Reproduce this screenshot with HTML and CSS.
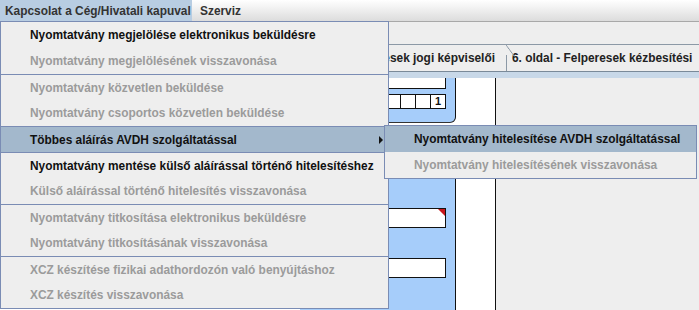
FILE: index.html
```html
<!DOCTYPE html>
<html lang="hu">
<head>
    <meta charset="UTF-8">
    <title>Nyomtatványkitöltő</title>
    <link rel="stylesheet" href="styles.css">
</head>
<body>
<div class="app">

    <div class="menubar">
        <span class="menu-title active">Kapcsolat a Cég/Hivatali kapuval</span>
        <span class="menu-title">Szerviz</span>
    </div>

    <div class="toolbar"></div>

    <div class="tabs">
        <div class="tab tab-first"></div>
        <div class="tab tab-prev">5. oldal - Felperesek jogi képviselői</div>
        <div class="tab tab-next">6. oldal - Felperesek kézbesítési</div>
    </div>
    <div class="tab-band"></div>

    <div class="sheet">
        <div class="sheet-left"></div>
        <div class="blue-col">
            <div class="blue-box box-top">
                <div class="field field-top"></div>
                <div class="cells">
                    <span></span><span></span><span></span><span>1</span>
                </div>
            </div>
            <div class="blue-box box-bottom">
                <div class="field flagged"></div>
                <div class="field"></div>
            </div>
        </div>
        <div class="white-col"></div>
        <div class="sheet-rest"></div>
    </div>

    <!-- open menu -->
    <div class="popup main-menu">
        <div class="item">Nyomtatvány megjelölése elektronikus beküldésre</div>
        <div class="item disabled">Nyomtatvány megjelölésének visszavonása</div>
        <div class="item first disabled">Nyomtatvány közvetlen beküldése</div>
        <div class="item disabled">Nyomtatvány csoportos közvetlen beküldése</div>
        <div class="item first selected has-sub">
            <span>Többes aláírás AVDH szolgáltatással</span>
            <span class="arrow"></span>
        </div>
        <div class="item first">Nyomtatvány mentése külső aláírással történő hitelesítéshez</div>
        <div class="item disabled">Külső aláírással történő hitelesítés visszavonása</div>
        <div class="item first disabled">Nyomtatvány titkosítása elektronikus beküldésre</div>
        <div class="item disabled">Nyomtatvány titkosításának visszavonása</div>
        <div class="item first disabled">XCZ készítése fizikai adathordozón való benyújtáshoz</div>
        <div class="item disabled">XCZ készítés visszavonása</div>
    </div>

    <div class="popup sub-menu">
        <div class="item selected">Nyomtatvány hitelesítése AVDH szolgáltatással</div>
        <div class="item disabled">Nyomtatvány hitelesítésének visszavonása</div>
    </div>

</div>
</body>
</html>
```

FILE: styles.css
```css
* { box-sizing: border-box; }
body { margin: 0; font-family: "Liberation Sans", Arial, sans-serif; font-size: 11.9px; font-weight: bold; color: #111; }
.app { position: relative; width: 699px; height: 310px; overflow: hidden; background: #eeeeee; }

/* menu bar */
.menubar { display: flex; height: 22px; background: linear-gradient(#ffffff, #dcdcdc); border-bottom: 1px solid #a8a8a8; }
.menu-title { display: flex; align-items: center; padding: 0 5px; color: #333; white-space: nowrap; }
.menu-title.active { width: 192px; background: #b8cde2; }
.menu-title + .menu-title { padding-left: 8px; }

.toolbar { height: 23px; border-bottom: 1px solid #8c99a6; }

/* tabs */
.tabs { display: flex; height: 26px; overflow: hidden; }
.tab { display: flex; align-items: center; flex-shrink: 0; white-space: nowrap; padding: 0 11px; color: #222; background: #eeeeee; overflow: hidden; }
.tab-first { width: 250px; }
.tab-prev { width: 256px; justify-content: flex-end; }
.tab-next { position: relative; flex: 1 1 auto; padding-left: 6px; }
.tab-next::before { content: ""; position: absolute; left: 0; top: 0; width: 8px; height: 11px;
    background: linear-gradient(to top right, transparent 45%, #8c99a6 50%, transparent 57%); }
.tab-next::after { content: ""; position: absolute; left: 0; top: 10px; bottom: 0; width: 1px; background: #8c99a6; }
.tab-band { height: 7px; border-top: 1px solid #7a8a99; background: #c8d8e8; }

/* form sheet */
.sheet { display: flex; height: 232px; }
.sheet-left { width: 300px; background: #ffffff; }
.blue-col { display: flex; flex-direction: column; gap: 2px; width: 156px; background: #ffffff; }
.blue-box { background: #a6cdfa; border-right: 1px solid #111; padding-right: 9px; }
.box-top { height: 45px; border-bottom: 1px solid #333; border-bottom-right-radius: 6px; }
.box-bottom { flex: 1; padding-top: 83px; }
.field { position: relative; height: 20px; background: #fff; border: 1px solid #111; }
.field + .field { margin-top: 30px; }
.field-top { height: 11px; border-top: none; }
.flagged::after { content: ""; position: absolute; right: 0; top: 0; border-top: 7px solid #c8161b; border-left: 7px solid transparent; }
.cells { display: flex; justify-content: flex-end; margin-top: 5px; }
.cells span { width: 15px; height: 15px; background: #fff; border: 1px solid #111; border-right: none;
    font-size: 11px; text-align: center; line-height: 13px; }
.cells span:last-child { width: 16px; border-right: 1px solid #111; }
.white-col { width: 40px; background: #fff; border-right: 1px solid #111; }
.sheet-rest { flex: 1; }

/* popup menus */
.popup { position: absolute; background: #eeeeee; border: 1px solid #7a8cb4; }
.main-menu { left: 0; top: 21px; width: 389px; }
.sub-menu { left: 384px; top: 125px; width: 313px; }
.item { display: flex; align-items: center; height: 26px; padding-left: 29px; white-space: nowrap; }
.item.first { border-top: 1px solid #7a8cb4; }
.item.disabled { color: #9b9b9b; }
.item.selected { background: #a3b8cc; }
.has-sub { justify-content: space-between; padding-right: 5px; }
.arrow { width: 0; height: 0; border-left: 4px solid #111; border-top: 4px solid transparent; border-bottom: 4px solid transparent; }
```
